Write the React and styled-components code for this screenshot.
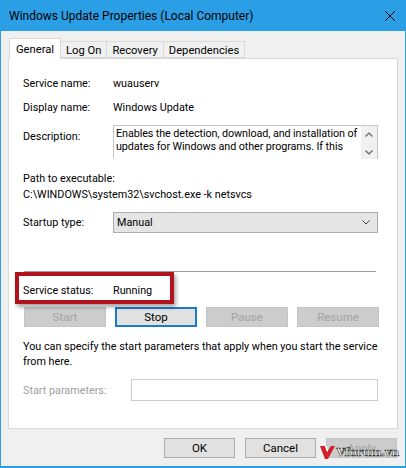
import React from "react";
import styled, { createGlobalStyle } from "styled-components";

const GlobalStyle = createGlobalStyle`
  html, body { margin: 0; padding: 0; background: #fff; }
  body {
    font-family: Roboto, "Liberation Sans", Arial, sans-serif;
    font-size: 10.8px;
    color: #000;
  }
`;

const Window = styled.div`
  position: relative;
  width: 406px;
  height: 468px;
  box-sizing: border-box;
  background: #f0f0f0;
  border: 1px solid #2b9fe6;
  border-top: none;
  border-bottom-width: 2px;
  display: flex;
  flex-direction: column;
`;

const TitleBar = styled.div`
  height: 31px;
  flex: none;
  background: #2b9fe6;
  display: flex;
  align-items: center;
  justify-content: space-between;
  padding: 0 9px 0 8px;
  font-size: 12px;
  color: #000;
`;

const Close = styled.svg`
  width: 12px;
  height: 12px;
`;

const Body = styled.div`
  flex: 1;
  display: flex;
  flex-direction: column;
  padding: 7px 7px 0 7px;
`;

const Tabs = styled.div`
  display: flex;
  align-items: flex-end;
  height: 20px;
  padding-left: 1px;
  position: relative;
  z-index: 1;
`;

const Tab = styled.div`
  height: ${(p) => (p.$active ? "21px" : "17px")};
  box-sizing: border-box;
  padding: 0 ${(p) => (p.$active ? "6px" : "5px")};
  display: flex;
  align-items: center;
  background: ${(p) => (p.$active ? "#fff" : "#f0f0f0")};
  border: 1px solid #d9d9d9;
  border-bottom: ${(p) => (p.$active ? "none" : "1px solid #d9d9d9")};
  border-left-width: ${(p) => (p.$active || p.$first ? "1px" : "0")};
  margin-bottom: ${(p) => (p.$active ? "-1px" : "0")};
  font-size: 11.2px;
  padding-top: ${(p) => (p.$active ? "0" : "1px")};
`;

const Panel = styled.div`
  position: relative;
  height: 371px;
  box-sizing: border-box;
  background: #fff;
  border: 1px solid #d9d9d9;
  padding: 17px 18px 0 14px;
  display: flex;
  flex-direction: column;
`;

const Row = styled.div`
  display: grid;
  grid-template-columns: 90px 1fr;
  align-items: ${(p) => (p.$top ? "start" : "center")};
  line-height: 15px;
  margin-top: ${(p) => p.$mt || 0}px;
  position: relative;
`;

const Label = styled.div`
  color: ${(p) => (p.$disabled ? "#a0a0a0" : "#000")};
  padding-top: ${(p) => p.$pt || 0}px;
`;

const Line = styled.div`
  line-height: 15px;
  margin-top: ${(p) => p.$mt || 0}px;
`;

const DescBox = styled.div`
  height: 34px;
  box-sizing: border-box;
  border: 1px solid #c8c8c8;
  border-bottom: none;
  display: flex;
  margin-right: 1px;
`;

const DescText = styled.div`
  flex: 1;
  padding: 1px 0 0 2px;
  line-height: 13px;
  letter-spacing: -0.1px;
  overflow: hidden;
`;

const ScrollBar = styled.div`
  width: 16px;
  background: #f0f0f0;
  display: flex;
  flex-direction: column;
  align-items: center;
  justify-content: space-between;
  padding: 6px 0 4px;
`;

const Arrow = styled.svg`
  width: 8px;
  height: 5px;
`;

const Select = styled.div`
  height: 21px;
  box-sizing: border-box;
  background: #e5e5e5;
  border: 1px solid #acacac;
  display: flex;
  align-items: center;
  justify-content: space-between;
  padding: 0 7px 0 3px;
  margin-right: 1px;
`;

const Separator = styled.div`
  height: 1px;
  background: #a0a0a0;
  margin: 38px 3px 0 1px;
`;

const Highlight = styled.div`
  position: absolute;
  left: -8px;
  top: -11px;
  width: 159px;
  height: 32px;
  box-sizing: border-box;
  border: 4px solid #b3121c;
  box-shadow: 2px 3px 4px rgba(0, 0, 0, 0.35);
`;

const ButtonRow = styled.div`
  display: grid;
  grid-template-columns: repeat(4, 82px);
  column-gap: 9px;
  padding-left: 1px;
  margin-top: 9px;
`;

const Button = styled.div`
  height: 20px;
  box-sizing: border-box;
  display: flex;
  align-items: center;
  justify-content: center;
  font-size: 11.5px;
  background: ${(p) => (p.$disabled ? "#cccccc" : "#e1e1e1")};
  color: ${(p) => (p.$disabled ? "#a3a3a3" : "#000")};
  border: ${(p) =>
    p.$focus ? "2px solid #1e7bc8" : p.$disabled ? "1px solid #c4c4c4" : "1px solid #adadad"};
`;

const Para = styled.div`
  margin-top: 12px;
  line-height: 15px;
  white-space: nowrap;
`;

const Input = styled.div`
  height: 22px;
  box-sizing: border-box;
  border: 1px solid #cccccc;
  background: #fff;
  margin-left: 18px;
  margin-right: 1px;
`;

const Footer = styled.div`
  display: flex;
  justify-content: flex-end;
  gap: 10px;
  padding: 9px 0 0 0;
  margin-right: 1px;
`;

const FooterButton = styled(Button)`
  width: 71px;
`;

const Watermark = styled.div`
  position: absolute;
  right: 6px;
  bottom: 7px;
  display: flex;
  align-items: center;
  gap: 2px;
  font-family: "DejaVu Serif", serif;
  font-weight: bold;
  font-size: 11px;
  color: #fff;
  -webkit-text-stroke: 0.6px #333;
  letter-spacing: -0.2px;
`;

export default function App() {
  return (
    <>
      <GlobalStyle />
      <Window>
        <TitleBar>
          <span>Windows Update Properties (Local Computer)</span>
          <Close viewBox="0 0 12 12">
            <path d="M1 1 L11 11 M11 1 L1 11" stroke="#000" strokeWidth="1" />
          </Close>
        </TitleBar>
        <Body>
          <Tabs>
            <Tab $active $first>General</Tab>
            <Tab>Log On</Tab>
            <Tab>Recovery</Tab>
            <Tab>Dependencies</Tab>
          </Tabs>
          <Panel>
            <Row>
              <Label>Service name:</Label>
              <div>wuauserv</div>
            </Row>
            <Row $mt={9}>
              <Label>Display name:</Label>
              <div>Windows Update</div>
            </Row>
            <Row $top $mt={10}>
              <Label $pt={4}>Description:</Label>
              <DescBox>
                <DescText>
                  Enables the detection, download, and installation of updates for Windows and other programs. If this
                </DescText>
                <ScrollBar>
                  <Arrow viewBox="0 0 8 5">
                    <path d="M0.5 4.5 L4 1 L7.5 4.5" fill="none" stroke="#606060" strokeWidth="1.2" />
                  </Arrow>
                  <Arrow viewBox="0 0 8 5">
                    <path d="M0.5 0.5 L4 4 L7.5 0.5" fill="none" stroke="#606060" strokeWidth="1.2" />
                  </Arrow>
                </ScrollBar>
              </DescBox>
            </Row>
            <Line $mt={12}>Path to executable:</Line>
            <Line $mt={1}>C:\WINDOWS\system32\svchost.exe -k netsvcs</Line>
            <Row $mt={10}>
              <Label>Startup type:</Label>
              <Select>
                <span>Manual</span>
                <Arrow viewBox="0 0 8 5">
                  <path d="M0.5 0.5 L4 4 L7.5 0.5" fill="none" stroke="#444" strokeWidth="1" />
                </Arrow>
              </Select>
            </Row>
            <Separator />
            <Row $mt={11}>
              <Highlight />
              <Label>Service status:</Label>
              <div>Running</div>
            </Row>
            <ButtonRow>
              <Button $disabled>Start</Button>
              <Button $focus>Stop</Button>
              <Button $disabled>Pause</Button>
              <Button $disabled>Resume</Button>
            </ButtonRow>
            <Para>
              You can specify the start parameters that apply when you start the service
              <br />
              from here.
            </Para>
            <Row $mt={10}>
              <Label $disabled>Start parameters:</Label>
              <Input />
            </Row>
          </Panel>
          <Footer>
            <FooterButton>OK</FooterButton>
            <FooterButton>Cancel</FooterButton>
            <FooterButton $disabled>Apply</FooterButton>
          </Footer>
        </Body>
        <Watermark>
          <svg width="15" height="13" viewBox="0 0 15 13">
            <path d="M0 0 H5 L7 6 L11 0 H15 L8 13 H5 Z" fill="#d4202a" />
            <path d="M5 0 H7 L8 4 L7 6 Z" fill="#fff" />
          </svg>
          <span>Vforum.vn</span>
        </Watermark>
      </Window>
    </>
  );
}
